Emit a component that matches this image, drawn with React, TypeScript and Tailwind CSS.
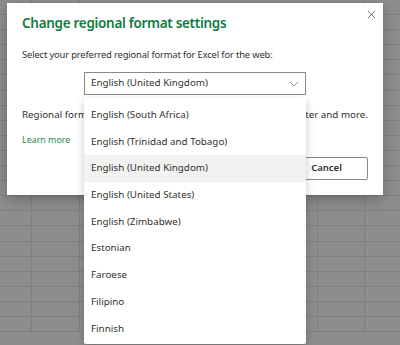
import React from 'react';
import { X, ChevronDown } from 'lucide-react';

const LOCALES = [
  'English (South Africa)',
  'English (Trinidad and Tobago)',
  'English (United Kingdom)',
  'English (United States)',
  'English (Zimbabwe)',
  'Estonian',
  'Faroese',
  'Filipino',
  'Finnish',
];

const SELECTED = 'English (United Kingdom)';

// dimmed spreadsheet behind the modal
const Sheet: React.FC = () => {
  const rows = Array.from({ length: 22 });
  const cols = Array.from({ length: 9 });
  return (
    <div className="h-[345px] w-[400px] overflow-hidden bg-[#8d8d8d]">
      {rows.map((_, r) => (
        <div key={r} className="flex h-[15.1px] border-b border-[#7f7f7f]">
          {cols.map((_, c) => (
            <div
              key={c}
              className={`${c === 0 ? 'w-[32px]' : 'w-[47.6px]'} shrink-0 border-r border-[#7f7f7f]`}
            />
          ))}
        </div>
      ))}
    </div>
  );
};

export default function App() {
  return (
    <div className="relative h-[345px] w-[400px] overflow-hidden font-['Noto_Sans','Open_Sans',sans-serif] text-[#323130]">
      <Sheet />

      {/* Dialog */}
      <div className="absolute left-[7px] top-[3px] flex h-[192px] w-[376px] flex-col bg-white px-[15px] pt-[10px] shadow-[0_4px_12px_rgba(0,0,0,0.25)]">
        <button className="absolute right-[4px] top-[3px] flex h-[16px] w-[16px] items-center justify-center text-[#323130]">
          <X size={13} strokeWidth={1.3} />
        </button>
        <h2 className="text-[13.5px] font-semibold leading-[20px] tracking-[-0.3px] text-[#107c41]">
          Change regional format settings
        </h2>
        <p className="mt-[15px] text-[9.4px] leading-[14px] tracking-[-0.15px]">
          Select your preferred regional format for Excel for the web:
        </p>
        <div className="mt-[10px] flex justify-center">
          <div className="flex h-[23px] w-[222px] items-center justify-between border border-[#8a8886] pl-[6px] pr-[3px] text-[9.8px]">
            <span>{SELECTED}</span>
            <ChevronDown size={16} strokeWidth={1} className="text-[#605e5c]" />
          </div>
        </div>
        <div className="mt-[13px] flex justify-between text-[9.8px] leading-[14px]">
          <span className="min-w-0 flex-1 overflow-hidden whitespace-nowrap">
            Regional format affects dates, numbers, currency, sort,
          </span>
          <span className="whitespace-nowrap">filter and more.</span>
        </div>
        <a className="mt-[12px] text-[8.9px] leading-[12px] text-[#1e8c4e]">Learn more</a>
        <div className="mt-[11px] flex justify-end">
          <button className="h-[23px] w-[83px] rounded-[2px] border border-[#8a8886] bg-white text-center text-[9.5px] font-semibold">
            Cancel
          </button>
        </div>
      </div>

      {/* Open listbox */}
      <ul className="absolute left-[84px] top-[98px] w-[222px] rounded-[2px] bg-white pb-[2px] pt-[4px] shadow-[0_3px_8px_rgba(0,0,0,0.22)]">
        {LOCALES.map((name) => (
          <li
            key={name}
            className={`flex h-[26.7px] items-center pl-[7px] text-[9.8px] ${name === SELECTED ? 'bg-[#f3f2f1]' : ''}`}
          >
            {name}
          </li>
        ))}
      </ul>
    </div>
  );
}
